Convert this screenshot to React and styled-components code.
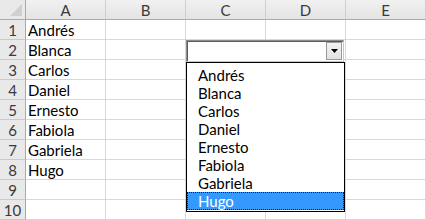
import React from "react";
import styled, { createGlobalStyle } from "styled-components";

const Global = createGlobalStyle`
  html, body { margin: 0; padding: 0; background: #ffffff; }
  body { font-family: Lato, "Open Sans", sans-serif; }
`;

const Sheet = styled.div`
  position: relative;
  width: 426px;
  height: 220px;
  overflow: hidden;
  background: #fff;
`;

const Grid = styled.div`
  display: grid;
  grid-template-columns: 26px repeat(5, 80px);
  grid-auto-rows: 20px;
`;

const Corner = styled.div`
  box-sizing: border-box;
  background: #e9e9e9;
  border-right: 1px solid #a9a9a9;
  border-bottom: 1px solid #a9a9a9;
  display: flex;
  align-items: flex-end;
  justify-content: flex-end;
  padding: 0 3px 3px 0;
`;

const ColHeader = styled.div`
  box-sizing: border-box;
  background: linear-gradient(#f1f1f1, #e4e4e4);
  border-right: 1px solid #cfcfcf;
  border-bottom: 1px solid #a9a9a9;
  display: flex;
  align-items: center;
  justify-content: center;
  font-size: 15px;
  color: #3a3a3a;
`;

const RowHeader = styled.div`
  box-sizing: border-box;
  background: #e9e9e9;
  border-right: 1px solid #a9a9a9;
  border-bottom: 1px solid #c9c9c9;
  display: flex;
  align-items: center;
  justify-content: center;
  font-size: 15px;
  color: #3a3a3a;
`;

const Cell = styled.div`
  box-sizing: border-box;
  border-right: 1px solid #d8d8d8;
  border-bottom: 1px solid #d8d8d8;
  display: flex;
  align-items: center;
  padding-left: 2px;
  font-size: 15px;
  color: #000;
  white-space: nowrap;
`;

const Combo = styled.div`
  position: absolute;
  left: 186px;
  top: 40px;
  width: 158px;
  height: 22px;
  box-sizing: border-box;
  border: 1px solid #8c8c8c;
  border-right-color: #c8c8c8;
  border-bottom-color: #c8c8c8;
  box-shadow: inset 1px 1px 0 #5e5e5e;
  background: #fff;
  display: flex;
  justify-content: flex-end;
  padding: 1px 1px 1px 0;
`;

const DropButton = styled.div`
  width: 16px;
  box-sizing: border-box;
  background: linear-gradient(#f4f4f4, #e2e2e2);
  border: 1px solid #9a9a9a;
  display: flex;
  align-items: center;
  justify-content: center;
`;

const ListBox = styled.div`
  position: absolute;
  left: 186px;
  top: 62px;
  width: 159px;
  height: 150px;
  box-sizing: border-box;
  border: 1px solid #000;
  background: #fff;
  padding: 3px 0 0 0;
  display: flex;
  flex-direction: column;
`;

const Item = styled.div`
  height: 18px;
  box-sizing: border-box;
  padding-left: 10px;
  display: flex;
  align-items: center;
  font-size: 15px;
  color: ${(p) => (p.$selected ? "#fff" : "#000")};
  background: ${(p) => (p.$selected ? "#3399ff" : "transparent")};
  border: 1px dotted ${(p) => (p.$selected ? "#1a1a1a" : "transparent")};
`;

const names = ["Andrés", "Blanca", "Carlos", "Daniel", "Ernesto", "Fabiola", "Gabriela", "Hugo"];
const cols = ["A", "B", "C", "D", "E"];

export default function App() {
  const rows = Array.from({ length: 10 }, (_, i) => i + 1);
  return (
    <>
      <Global />
      <Sheet>
        <Grid>
          <Corner>
            <svg width="12" height="12" viewBox="0 0 12 12">
              <polygon points="12,0 12,12 0,12" fill="#cfcfcf" />
            </svg>
          </Corner>
          {cols.map((c) => (
            <ColHeader key={c}>{c}</ColHeader>
          ))}
          {rows.map((r) => (
            <React.Fragment key={r}>
              <RowHeader>{r}</RowHeader>
              {cols.map((c) => (
                <Cell key={c}>{c === "A" ? names[r - 1] || "" : ""}</Cell>
              ))}
            </React.Fragment>
          ))}
        </Grid>
        <Combo>
          <DropButton>
            <svg width="7" height="4" viewBox="0 0 7 4">
              <polygon points="0,0 7,0 3.5,4" fill="#000" />
            </svg>
          </DropButton>
        </Combo>
        <ListBox>
          {names.map((n) => (
            <Item key={n} $selected={n === "Hugo"}>
              {n}
            </Item>
          ))}
        </ListBox>
      </Sheet>
    </>
  );
}
